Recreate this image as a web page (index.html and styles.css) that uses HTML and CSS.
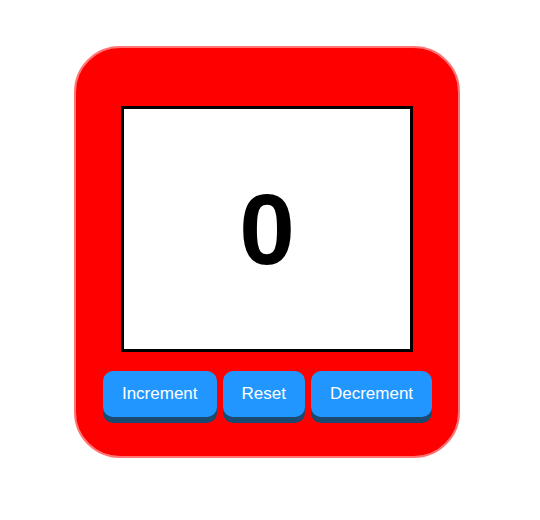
FILE: index.html
```html
<!DOCTYPE html>
<html>
<head>
<meta charset="utf-8">
<link rel="stylesheet" href="styles.css">
</head>
<body>
<div class="counter">
  <div class="display"><span class="value">0</span></div>
  <div class="buttons">
    <button class="btn">Increment</button>
    <button class="btn">Reset</button>
    <button class="btn">Decrement</button>
  </div>
</div>
</body>
</html>
```
FILE: styles.css
```css
html, body {
  margin: 0;
  padding: 0;
  background: #fff;
  font-family: "Liberation Sans", Arial, sans-serif;
}
body {
  padding: 46px 0 0 74px;
}
.counter {
  box-sizing: border-box;
  width: 386px;
  height: 412px;
  background: #ff0000;
  border: 2px solid #ff7474;
  border-radius: 46px;
  padding-top: 58px;
  display: flex;
  flex-direction: column;
  align-items: center;
}
.display {
  box-sizing: border-box;
  width: 292px;
  height: 246px;
  background: #fff;
  border: 3px solid #000;
  display: flex;
  align-items: center;
  justify-content: center;
}
.value {
  font-size: 100px;
  font-weight: bold;
  color: #000;
  line-height: 1;
}
.buttons {
  margin-top: 19px;
  display: flex;
  gap: 6px;
  margin-left: 1px;
}
.btn {
  height: 46px;
  padding: 0 19px;
  border: none;
  border-radius: 10px;
  background: #2196ff;
  color: #fff;
  font-family: "Liberation Sans", Arial, sans-serif;
  font-size: 17px;
  box-shadow: 0 6px 0 #1b4a70;
}
```
